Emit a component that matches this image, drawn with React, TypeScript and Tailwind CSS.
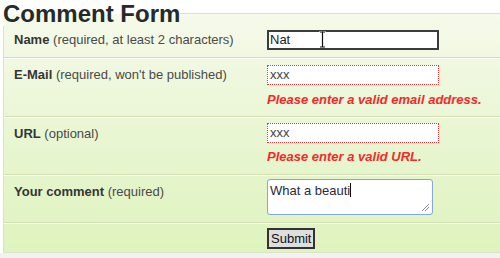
import React from 'react';

const font = { fontFamily: '"Liberation Sans", Arial, sans-serif' };

function Label({ strong, note, top = 'pt-[8px]' }: { strong: string; note: string; top?: string }) {
  return (
    <div className={`w-[253px] shrink-0 ${top} text-[13px] leading-[16px]`}>
      <span className="font-bold text-[#353535]">{strong}</span>{' '}
      <span className="text-[#4a4a4a]">{note}</span>
    </div>
  );
}

function ErrorText({ children }: { children: React.ReactNode }) {
  return (
    <div className="text-[13px] leading-[16px] font-bold italic text-[#f42a2a]">{children}</div>
  );
}

export default function App() {
  return (
    <div className="w-[500px] h-[258px] overflow-hidden bg-[#f2f2f2]" style={font}>
      <div className="bg-white pt-[1px]">
        <fieldset className="ml-[3px] w-[510px] border border-[#dce3c4] bg-gradient-to-b from-[#f5faea] via-[#e9f6d3] to-[#dff3be]">
          <legend className="text-[24px] leading-[25px] font-bold text-[#262a2a] -ml-[1px]">Comment Form</legend>

          {/* name */}
          <div className="flex pl-[10px] pb-[7px] border-b border-[#d2e1b4]">
            <Label strong="Name" note="(required, at least 2 characters)" top="pt-[6px]" />
            <div className="relative pt-[4px]">
              <div className="w-[172px] h-[20px] border-2 border-[#3c3c3c] bg-white px-[1px] text-[13px] leading-[16px] text-[#222]">
                Nat
              </div>
              {/* mouse I-beam */}
              <svg className="absolute left-[52px] top-[5px]" width="7" height="17" viewBox="0 0 7 17">
                <path d="M0.5 0.5h2.5v16H0.5M6.5 0.5H4v16h2.5" fill="none" stroke="#fff" strokeWidth="1" />
                <path d="M1 1h5M3.5 1v15M1 16h5" fill="none" stroke="#111" strokeWidth="1.2" />
              </svg>
            </div>
          </div>

          {/* email */}
          <div className="flex pl-[10px] pb-[8px] border-t border-white border-b border-b-[#d2e1b4]">
            <Label strong="E-Mail" note="(required, won't be published)" />
            <div className="pt-[6px]">
              <div className="w-[172px] h-[20px] border border-dotted border-[#ee3838] bg-white px-[2px] text-[13px] leading-[18px] text-[#444]">
                xxx
              </div>
              <div className="mt-[7px]">
                <ErrorText>Please enter a valid email address.</ErrorText>
              </div>
            </div>
          </div>

          {/* url */}
          <div className="flex pl-[10px] pb-[9px] border-t border-white border-b border-b-[#d2e1b4]">
            <Label strong="URL" note="(optional)" />
            <div className="pt-[5px]">
              <div className="w-[172px] h-[20px] border border-dotted border-[#ee3838] bg-white px-[2px] text-[13px] leading-[18px] text-[#444]">
                xxx
              </div>
              <div className="mt-[6px]">
                <ErrorText>Please enter a valid URL.</ErrorText>
              </div>
            </div>
          </div>

          {/* comment */}
          <div className="flex pl-[10px] pb-[7px] border-t border-white border-b border-b-[#d2e1b4]">
            <Label strong="Your comment" note="(required)" />
            <div className="pt-[3px]">
              <div className="relative w-[166px] h-[36px] rounded-[3px] border border-[#86a8d6] bg-white px-[2px] pt-[3px] text-[13px] leading-[15px] text-[#2a2a3a] shadow-[inset_0_0_1px_#c7d7ee]">
                What a beauti<span className="inline-block w-px h-[14px] bg-[#111] align-[-2px]" />
                <svg className="absolute right-[2px] bottom-[2px]" width="9" height="9" viewBox="0 0 9 9">
                  <path d="M8 1L1 8M8 4L4 8" stroke="#8a8a8a" strokeWidth="1" />
                </svg>
              </div>
            </div>
          </div>

          {/* submit */}
          <div className="flex pl-[10px] pt-[4px] pb-[3px] border-t border-white">
            <div className="w-[253px] shrink-0" />
            <button className="h-[21px] px-[2px] border-2 border-[#333] bg-[#dedede] text-[13px] leading-[15px] text-[#111]">
              Submit
            </button>
          </div>
        </fieldset>
      </div>
    </div>
  );
}
